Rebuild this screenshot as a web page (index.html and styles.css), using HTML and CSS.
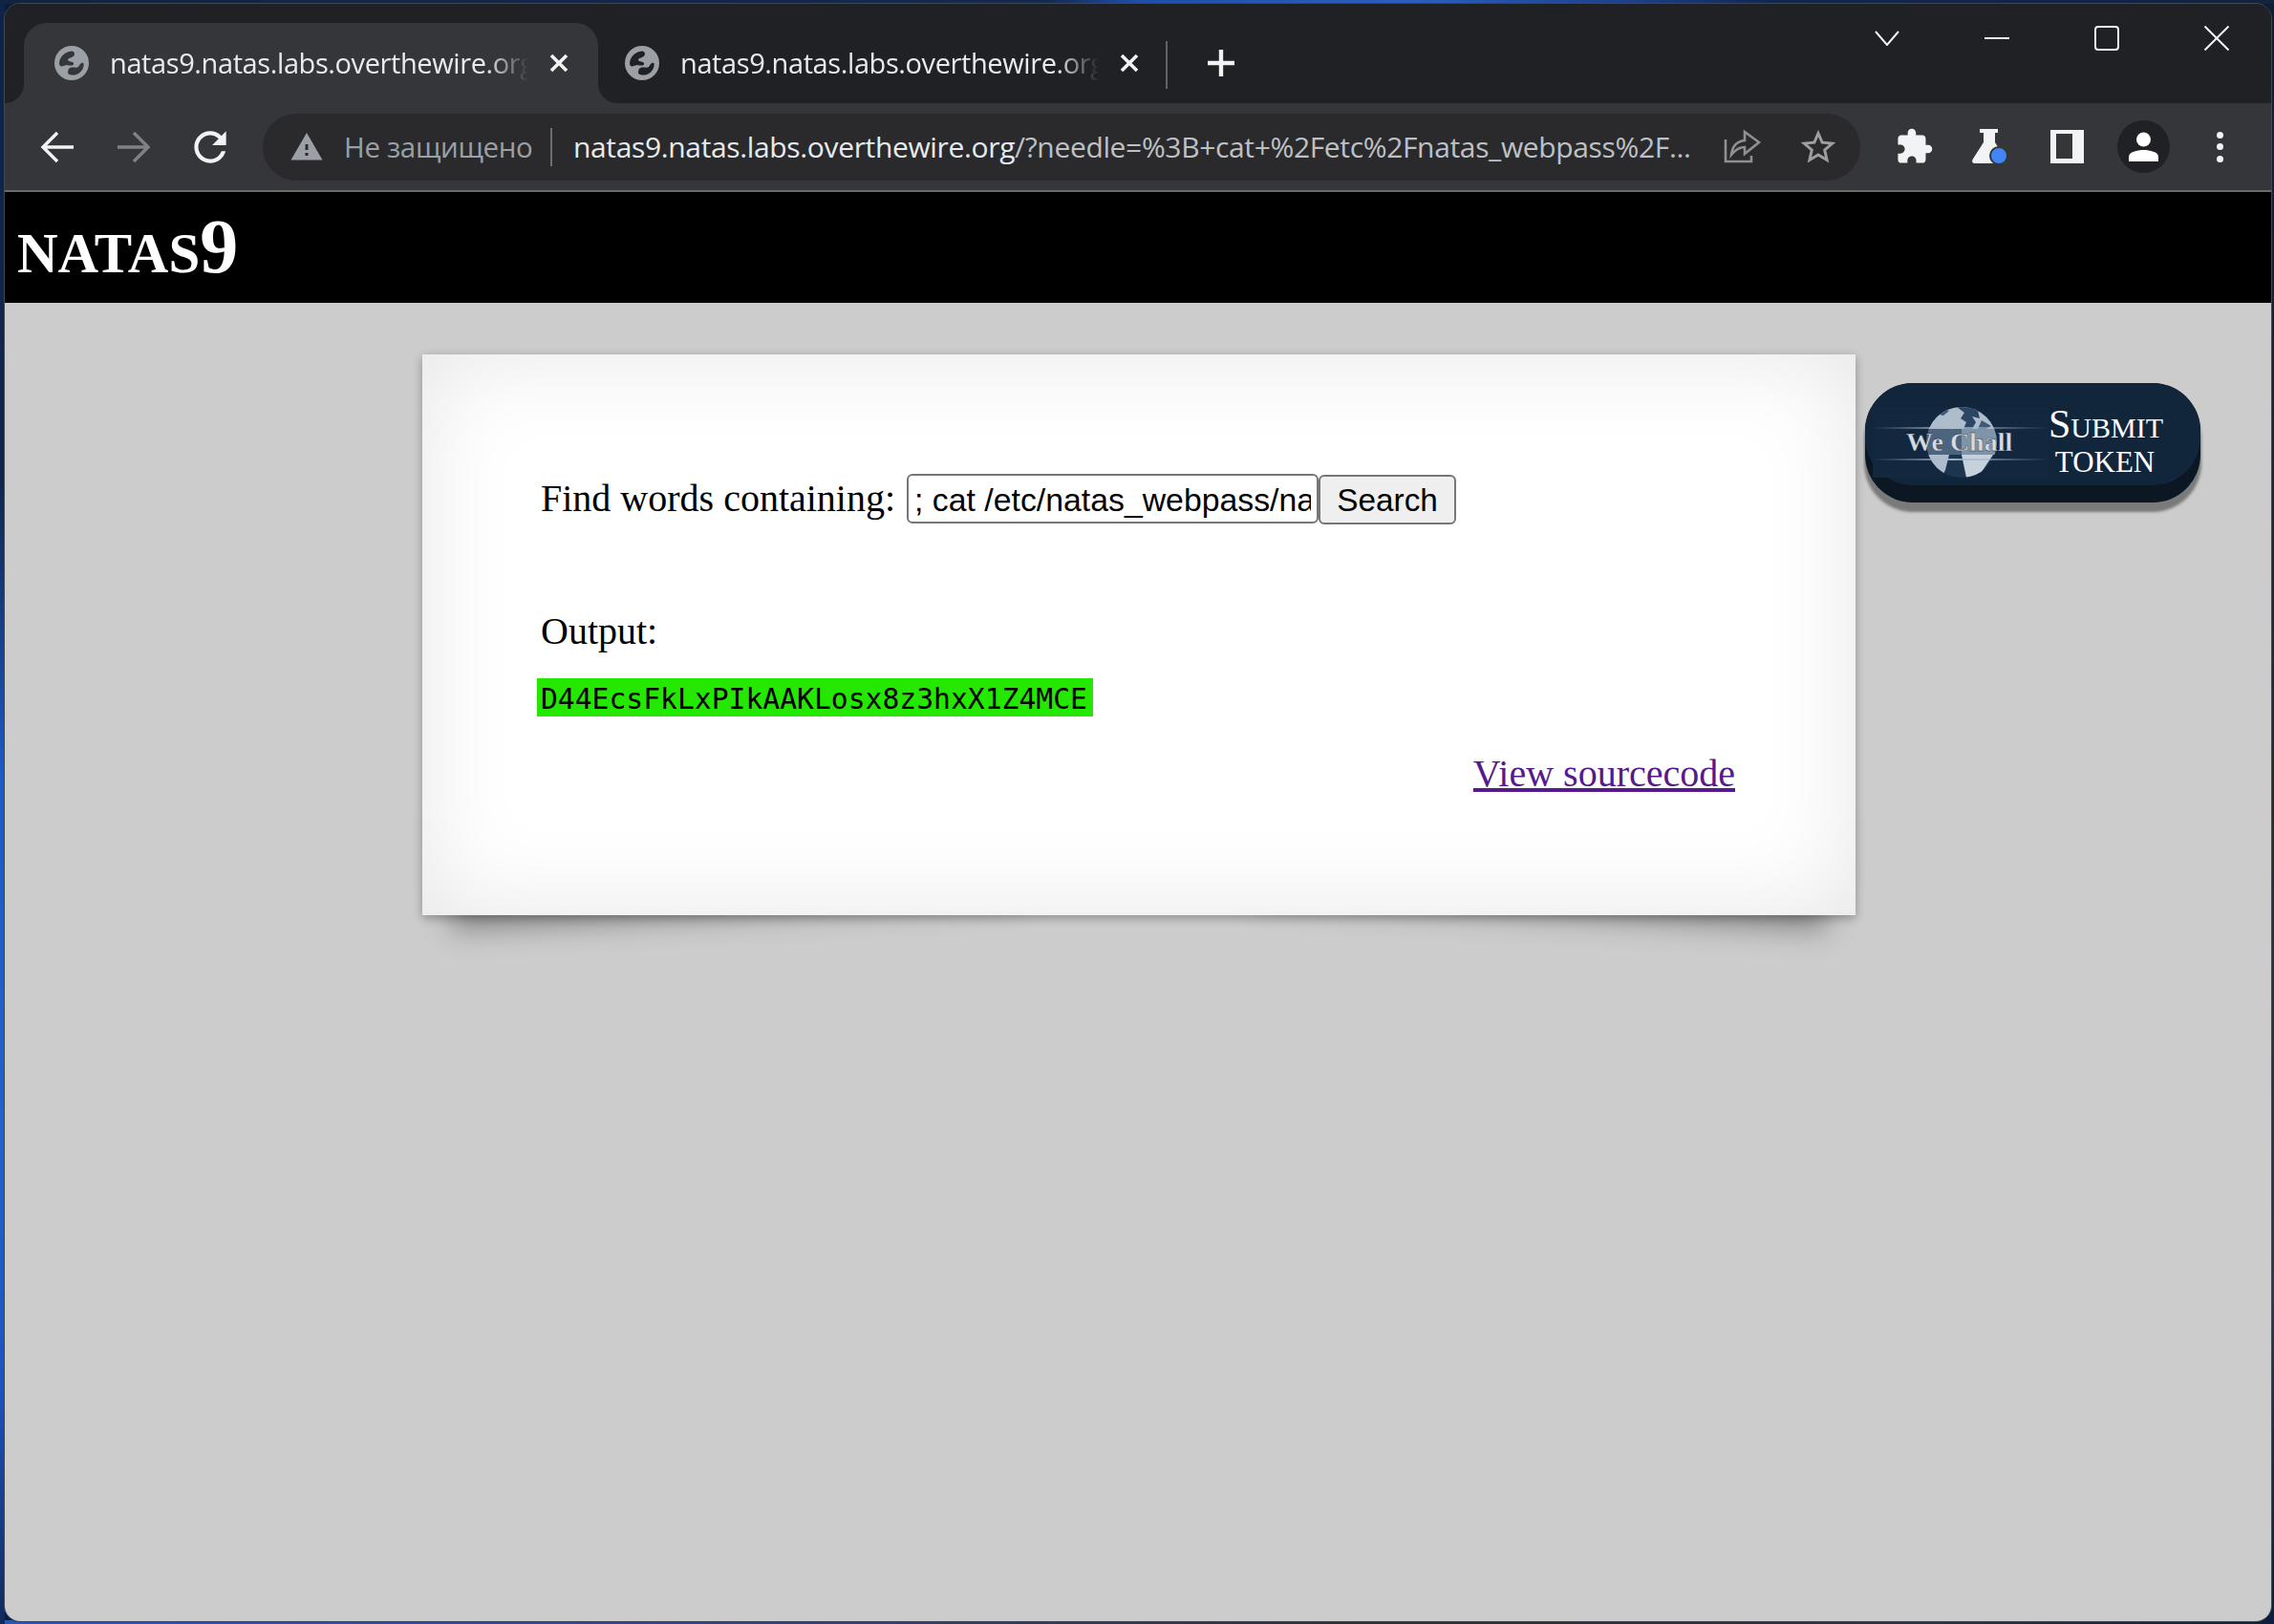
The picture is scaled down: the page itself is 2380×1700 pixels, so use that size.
FILE: index.html
```html
<!DOCTYPE html>
<html lang="ru">
<head>
<meta charset="utf-8">
<title>natas9.natas.labs.overthewire.org</title>
<link rel="stylesheet" href="styles.css">
</head>
<body>
<div class="window">
  <div class="tabstrip">
    <div class="tab tab-active">
      <svg class="favicon" viewBox="0 0 36 36"><circle cx="18" cy="18" r="18" fill="#9aa0a6"/><path d="M18 5.500C11 6 5.500 11.500 5 18c0 2 1 3.500 2.500 3.500L13 20c4 1 8 1 7-2-1-2-5-1-6-3 0-3 6-2 7-6 .3-1.500-1-3.500-3-3.500z" fill="#35363a"/><path d="M15 24c3-3 8 0 10-2 2-3 3-5 5-4 1 .5.800 4-.5 6-2 4-5.500 6.500-9.500 6.500-3 0-6-.5-6-2.500 0-1.500.500-3 1-4z" fill="#35363a"/></svg>
      <span class="tab-title">natas9.natas.labs.overthewire.org</span>
      <svg class="tab-close" viewBox="0 0 20 20"><path d="M2 2L18 18M18 2L2 18"/></svg>
    </div>
    <div class="tab tab-other">
      <svg class="favicon" viewBox="0 0 36 36"><circle cx="18" cy="18" r="18" fill="#9aa0a6"/><path d="M18 5.500C11 6 5.500 11.500 5 18c0 2 1 3.500 2.500 3.500L13 20c4 1 8 1 7-2-1-2-5-1-6-3 0-3 6-2 7-6 .3-1.500-1-3.500-3-3.500z" fill="#202124"/><path d="M15 24c3-3 8 0 10-2 2-3 3-5 5-4 1 .5.800 4-.5 6-2 4-5.500 6.500-9.500 6.500-3 0-6-.5-6-2.500 0-1.500.500-3 1-4z" fill="#202124"/></svg>
      <span class="tab-title">natas9.natas.labs.overthewire.org</span>
      <svg class="tab-close" viewBox="0 0 20 20"><path d="M2 2L18 18M18 2L2 18"/></svg>
    </div>
    <div class="new-tab">
      <svg viewBox="0 0 30 30"><path d="M15 1V29M1 15H29"/></svg>
    </div>
    <div class="window-controls">
      <div class="win-btn"><svg class="win-chevron" viewBox="0 0 26 16"><path d="M1 1L13 15L25 1"/></svg></div>
      <div class="win-btn"><svg class="win-min" viewBox="0 0 26 4"><path d="M0 2H26"/></svg></div>
      <div class="win-btn"><svg class="win-square" viewBox="0 0 26 26"><rect x="1" y="1" width="24" height="24" rx="3"/></svg></div>
      <div class="win-btn"><svg class="win-square" viewBox="0 0 26 26"><path d="M0.500 0.500L25.500 25.500M25.500 0.500L0.500 25.500"/></svg></div>
    </div>
  </div>

  <div class="toolbar">
    <div class="tool-btn"><svg class="nav-icon" viewBox="0 0 36 34"><path d="M35 17H3M18 2L3 17L18 32"/></svg></div>
    <div class="tool-btn tool-off"><svg class="nav-icon" viewBox="0 0 36 34"><path d="M1 17H33M18 2L33 17L18 32"/></svg></div>
    <div class="tool-btn"><svg class="reload-icon" viewBox="0 0 24 24"><path d="M17.650 6.350C16.200 4.900 14.210 4 12 4c-4.420 0-7.990 3.580-7.990 8s3.570 8 7.990 8c3.730 0 6.840-2.550 7.730-6h-2.080c-.82 2.330-3.040 4-5.650 4-3.310 0-6-2.690-6-6s2.690-6 6-6c1.660 0 3.140.69 4.220 1.780L13 11h7V4l-2.350 2.350z"/></svg></div>
    <div class="omnibox">
      <svg class="warn-icon" viewBox="0 0 24 24"><path d="M1 21h22L12 2 1 21zm12-3h-2v-2h2v2zm0-4h-2v-4h2v4z"/></svg>
      <span class="insecure">Не защищено</span>
      <span class="omni-sep"></span>
      <span class="url"><span class="url-host">natas9.natas.labs.overthewire.org</span>/?needle=%3B+cat+%2Fetc%2Fnatas_webpass%2F...</span>
      <svg class="share-icon" viewBox="0 0 40 38"><path d="M2 11V34H29V28"/><path d="M8 27C9 18 14 13 22 12V3L37 14L22 26V19C16 19 12 22 8 27Z"/></svg>
      <svg class="star-icon" viewBox="0 0 24 24"><path d="M22 9.240l-7.190-.62L12 2 9.190 8.630 2 9.240l5.460 4.730L5.820 21 12 17.270 18.180 21l-1.630-7.030L22 9.240zM12 15.400l-3.760 2.270 1-4.280-3.320-2.880 4.380-.38L12 6.100l1.710 4.040 4.380.38-3.320 2.880 1 4.280L12 15.400z"/></svg>
    </div>
    <div class="tool-group">
      <div class="tool-btn"><svg class="ext-icon" viewBox="0 0 24 24"><path d="M20.500 11H19V7c0-1.100-.9-2-2-2h-4V3.500C13 2.120 11.880 1 10.500 1S8 2.120 8 3.500V5H4c-1.100 0-1.990.9-1.990 2v3.800H3.500c1.490 0 2.700 1.210 2.700 2.700s-1.210 2.700-2.700 2.700H2V20c0 1.100.9 2 2 2h3.800v-1.500c0-1.490 1.210-2.700 2.700-2.700 1.490 0 2.700 1.210 2.700 2.700V22H17c1.100 0 2-.9 2-2v-4h1.500c1.380 0 2.500-1.120 2.500-2.500S21.880 11 20.500 11z"/></svg></div>
      <div class="tool-btn"><svg class="flask-icon" viewBox="0 0 40 40"><path class="flask-body" d="M9 1H28V5H25V15L36 33Q37 37 33 37H4Q0 37 1.500 33L13 15V5H9Z"/><circle class="flask-dot" cx="29" cy="29" r="9"/></svg></div>
      <div class="tool-btn"><div class="side-panel"></div></div>
      <div class="tool-btn"><svg class="avatar" viewBox="0 0 55 55"><circle class="avatar-bg" cx="27.500" cy="27.500" r="27.500"/><circle class="avatar-fg" cx="27.500" cy="20" r="7.500"/><path class="avatar-fg" d="M12 43V38C12 33 21 31 27.500 31S43 33 43 38V43Z"/></svg></div>
      <div class="tool-btn"><div class="dots"><i></i><i></i><i></i></div></div>
    </div>
  </div>

  <div class="page">
    <div class="site-header"><h1 class="site-title">NATAS<span class="site-num">9</span></h1></div>
    <div class="content">
      <form class="search-form">
        <label class="search-label" for="needle">Find words containing:</label>
        <span class="search-controls">
          <input class="search-input" id="needle" type="text" value="; cat /etc/natas_webpass/natas10">
          <button class="search-btn" type="button">Search</button>
        </span>
      </form>
      <div class="output-label">Output:</div>
      <div class="output-line"><span class="output-code">D44EcsFkLxPIkAAKLosx8z3hxX1Z4MCE</span></div>
      <div class="source-line"><a class="source-link" href="#">View sourcecode</a></div>
    </div>
    <div class="wechall">
      <div class="wechall-face">
        <svg class="wechall-logo" viewBox="0 0 192 74">
          <defs>
            <clipPath id="globe"><circle cx="101" cy="37" r="37"/></clipPath>
            <linearGradient id="streak" x1="0" x2="1" y1="0" y2="0">
              <stop offset="0" stop-color="#8ea4ba" stop-opacity="0"/>
              <stop offset=".45" stop-color="#a9bccd" stop-opacity=".9"/>
              <stop offset="1" stop-color="#8ea4ba" stop-opacity="0"/>
            </linearGradient>
          </defs>
          <rect class="logo-band" x="8" y="0" width="184" height="74"/>
          <g clip-path="url(#globe)">
            <circle cx="101" cy="37" r="37" fill="#1c3650"/>
            <rect x="60" y="0" width="84" height="23" fill="#aebdcc"/>
            <path fill="#2c4763" d="M96 0L104 6L100 12L106 16L103 23H112L116 16L112 10L120 12L118 4L110 0Z"/>
            <path fill="#3d5a76" d="M122 14L132 20L126 23H118Z"/>
            <path fill="#3d5a76" d="M78 0L88 4L82 9L74 7Z"/>
            <rect x="101" y="23" width="40" height="27" fill="#8094a9"/>
            <rect x="60" y="23" width="41" height="27" fill="#4c647d"/>
            <path fill="#aebdcc" d="M60 50H88L84 66L80 74H72L60 62Z"/>
            <path fill="#c5d1dc" d="M101 50H134L122 68L114 74H106Z"/>
          </g>
          <rect x="8" y="21" width="184" height="2" fill="url(#streak)"/>
          <rect x="8" y="54" width="184" height="2" fill="url(#streak)"/>
          <text class="logo-text" x="43" y="46">We Chall</text>
        </svg>
        <div class="wechall-text">
          <div class="wechall-submit">SUBMIT</div>
          <div class="wechall-token">TOKEN</div>
        </div>
      </div>
    </div>
  </div>
</div>
</body>
</html>
```
FILE: styles.css
```css
* { box-sizing: border-box; }
html, body { margin: 0; height: 100%; }
body {
  width: 2380px;
  height: 1700px;
  overflow: hidden;
  padding: 3px 2px 2px 4px;
  background-color: #0b1c3c;
  background-image:
    linear-gradient(90deg, #122440 0, #15294a 46%, #1f4ea8 50%, #2a5fc0 62%, #1d3f86 72%, #12264e 78%, #13233f 100%),
    linear-gradient(180deg, #0f2348 0, #0f2750 30%, #1b5ccc 48%, #2162d0 70%, #1a55c8 85%, #112a5c 100%),
    linear-gradient(90deg, #2a56ae 0, #2f4f9c 15%, #313f6e 40%, #2e3036 60%, #2a3342 85%, #101f3d 100%),
    linear-gradient(180deg, #0d1c38 0, #2a2c30 50%, #2b3a4f 80%, #0c1d3f 100%);
  background-size: 100% 4px, 5px 100%, 100% 4px, 4px 100%;
  background-position: 0 0, 0 0, 0 100%, 100% 0;
  background-repeat: no-repeat;
}

.window {
  width: 2374px;
  height: 1695px;
  border: 1px solid #43474d;
  border-radius: 17px;
  overflow: hidden;
  display: flex;
  flex-direction: column;
  background: #202124;
}

/* Tab strip */
.tabstrip {
  height: 104px;
  flex: none;
  display: flex;
  align-items: flex-end;
  padding-left: 20px;
  background: #202124;
  font-family: "Open Sans", "Noto Sans", sans-serif;
}
.tab {
  position: relative;
  width: 601px;
  height: 84px;
  display: flex;
  align-items: center;
  padding-left: 32px;
  padding-right: 21px;
  border-radius: 24px 24px 0 0;
}
.tab-active { background: #35363a; z-index: 1; }
.tab-active::before,
.tab-active::after {
  content: "";
  position: absolute;
  bottom: 0;
  width: 20px;
  height: 20px;
}
.tab-active::before {
  left: -20px;
  background: radial-gradient(circle at 0 0, transparent 19.5px, #35363a 20.5px);
}
.tab-active::after {
  right: -20px;
  background: radial-gradient(circle at 100% 0, transparent 19.5px, #35363a 20.5px);
}
.tab-other { margin-left: -4px; }
.tab-other::after {
  content: "";
  position: absolute;
  right: 1px;
  top: 19px;
  width: 2px;
  height: 50px;
  background: #5f6368;
}
.favicon { width: 36px; height: 36px; flex: none; }
.tab-title {
  flex: 1;
  min-width: 0;
  margin: 0 12px 0 22px;
  color: #e8eaed;
  font-size: 29px;
  letter-spacing: -0.4px;
  line-height: 40px;
  white-space: nowrap;
  overflow: hidden;
  -webkit-mask-image: linear-gradient(90deg, #000 90%, transparent 100%);
  mask-image: linear-gradient(90deg, #000 90%, transparent 100%);
}
.tab-close {
  width: 40px;
  height: 20px;
  flex: none;
  fill: none;
  stroke: #f1f3f4;
  stroke-width: 3.6;
}
.new-tab {
  width: 80px;
  height: 84px;
  margin-left: 15px;
  display: flex;
  align-items: center;
  justify-content: center;
}
.new-tab svg { width: 30px; height: 30px; fill: none; stroke: #f1f3f4; stroke-width: 4.4; }
.window-controls {
  margin-left: auto;
  align-self: flex-start;
  display: flex;
  height: 72px;
}
.win-btn {
  width: 115px;
  display: flex;
  align-items: center;
  justify-content: center;
}
.win-btn svg { width: 26px; fill: none; stroke: #f1f3f4; stroke-width: 2; }
.win-chevron { height: 16px; }
.win-min { height: 4px; }
.win-square { height: 26px; }

/* Toolbar */
.toolbar {
  height: 93px;
  flex: none;
  display: flex;
  align-items: center;
  padding: 0 0 0 15px;
  background: #35363a;
  border-bottom: 2px solid #6a6c70;
}
.tool-btn {
  width: 80px;
  height: 60px;
  flex: none;
  display: flex;
  align-items: center;
  justify-content: center;
}
.nav-icon { width: 36px; height: 34px; fill: none; stroke: #f1f3f4; stroke-width: 3.4; }
.tool-off .nav-icon { stroke: #7e8185; }
.reload-icon { width: 50px; height: 50px; fill: #f1f3f4; }
.omnibox {
  width: 1672px;
  height: 70px;
  flex: none;
  margin-left: 15px;
  padding-left: 28px;
  display: flex;
  align-items: center;
  border-radius: 35px;
  background: #2a2a2c;
  font-family: "Open Sans", "Noto Sans", sans-serif;
  font-size: 30px;
  font-weight: 500;
  letter-spacing: -0.35px;
  white-space: nowrap;
}
.warn-icon { width: 36px; height: 36px; flex: none; fill: #9aa0a6; }
.insecure { margin-left: 21px; width: 196px; color: #9aa0a6; flex: none; font-size: 29.500px; }
.omni-sep { width: 2px; height: 40px; margin: 0 22px 0 20px; background: #6b6e72; flex: none; }
.url { width: 1177px; flex: none; color: #bdc1c6; overflow: hidden; }
.url-host { color: #e8eaed; }
.share-icon {
  width: 40px;
  height: 38px;
  margin-left: 27px;
  flex: none;
  fill: none;
  stroke: #8e8f91;
  stroke-width: 2.6;
}
.star-icon { width: 44px; height: 44px; margin-left: 37px; flex: none; fill: #9e9e9e; }
.tool-group { display: flex; margin-left: 16px; }
.ext-icon { width: 41px; height: 41px; fill: #f1f3f4; }
.flask-icon { width: 40px; height: 40px; }
.flask-body { fill: #f1f3f4; }
.flask-dot { fill: #4285f4; stroke: #35363a; stroke-width: 2; }
.side-panel {
  width: 35px;
  height: 35px;
  border-style: solid;
  border-color: #f1f3f4;
  border-width: 4px 12px 5px 6px;
  background: #35363a;
}
.avatar { width: 55px; height: 55px; }
.avatar-bg { fill: #202124; }
.avatar-fg { fill: #fff; }
.dots { display: flex; flex-direction: column; gap: 5.500px; }
.dots i { display: block; width: 7px; height: 7px; border-radius: 50%; background: #f1f3f4; }

/* Page */
.page {
  position: relative;
  z-index: 0;
  flex: 1;
  min-height: 0;
  background: #ccc;
  font-family: "Liberation Serif", "Times New Roman", serif;
  font-size: 40px;
  color: #000;
}
.site-header {
  height: 116px;
  background: #000;
  display: flex;
  align-items: flex-start;
  padding-left: 13px;
}
.site-title {
  margin: 11px 0 0;
  color: #fff;
  font-size: 59px;
  font-weight: bold;
  line-height: 92px;
}
.site-num { font-size: 80px; }

.content {
  position: relative;
  width: 1500px;
  height: 587px;
  margin: 54px 0 0 437px;
  padding: 125px 126px 0 124px;
  background: #fff;
  box-shadow: 0 2.500px 10px rgba(0, 0, 0, .3), inset 0 0 100px rgba(0, 0, 0, .1);
}
.content::before,
.content::after {
  content: "";
  position: absolute;
  z-index: -1;
  bottom: 37px;
  width: 40%;
  height: 20%;
  box-shadow: 0 37px 30px rgba(0, 0, 0, .34);
}
.content::before { left: 25px; transform: rotate(-3deg); }
.content::after { right: 25px; transform: rotate(3deg); }

.search-form { display: flex; align-items: baseline; gap: 12px; }
.search-controls { display: flex; align-items: baseline; }
.search-input {
  width: 431px;
  height: 52px;
  padding: 2px 6px 0;
  border: 2.500px solid #767676;
  border-radius: 6px;
  background: #fff;
  color: #000;
  font-family: "Liberation Sans", Arial, sans-serif;
  font-size: 33.800px;
}
.search-btn {
  width: 144px;
  height: 52px;
  padding: 2px 0 0;
  border: 2.500px solid #767676;
  border-radius: 6px;
  background: #efefef;
  color: #000;
  font-family: "Liberation Sans", Arial, sans-serif;
  font-size: 33.300px;
}
.output-label { margin-top: 89px; line-height: 46px; }
.output-line { margin: 21.500px 0 0 -4px; height: 40px; }
.output-code {
  display: inline-block;
  height: 40px;
  padding: 5.500px 6px 0 4px;
  background: #24e800;
  font-family: "DejaVu Sans Mono", monospace;
  font-size: 29.700px;
  line-height: 34px;
}
.source-line { margin-top: 41.500px; text-align: right; line-height: 46px; }
.source-link { color: #551a8b; }

/* WeChall button */
.wechall {
  position: absolute;
  left: 1947px;
  top: 200px;
  width: 351px;
  height: 125px;
  border-radius: 50px;
  background: #0b1722;
  box-shadow: 0 9px 3px 1px #7a7a7a;
}
.wechall-face {
  height: 107px;
  border-radius: 50px;
  background: #12263b;
  display: flex;
  align-items: flex-start;
  padding-top: 25px;
}
.wechall-logo { width: 192px; height: 74px; flex: none; }
.logo-band { fill: #13283f; }
.logo-text {
  font-family: "Liberation Serif", serif;
  font-weight: bold;
  font-size: 28px;
  fill: #d3dce5;
  stroke: #0c1a2a;
  stroke-width: .3px;
}
.wechall-text {
  width: 118px;
  color: #fff;
  text-align: center;
  font-family: "Liberation Serif", serif;
  font-size: 31px;
  line-height: 36px;
}
.wechall-submit { font-size: 30px; }
.wechall-submit::first-letter { font-size: 42px; }
```
